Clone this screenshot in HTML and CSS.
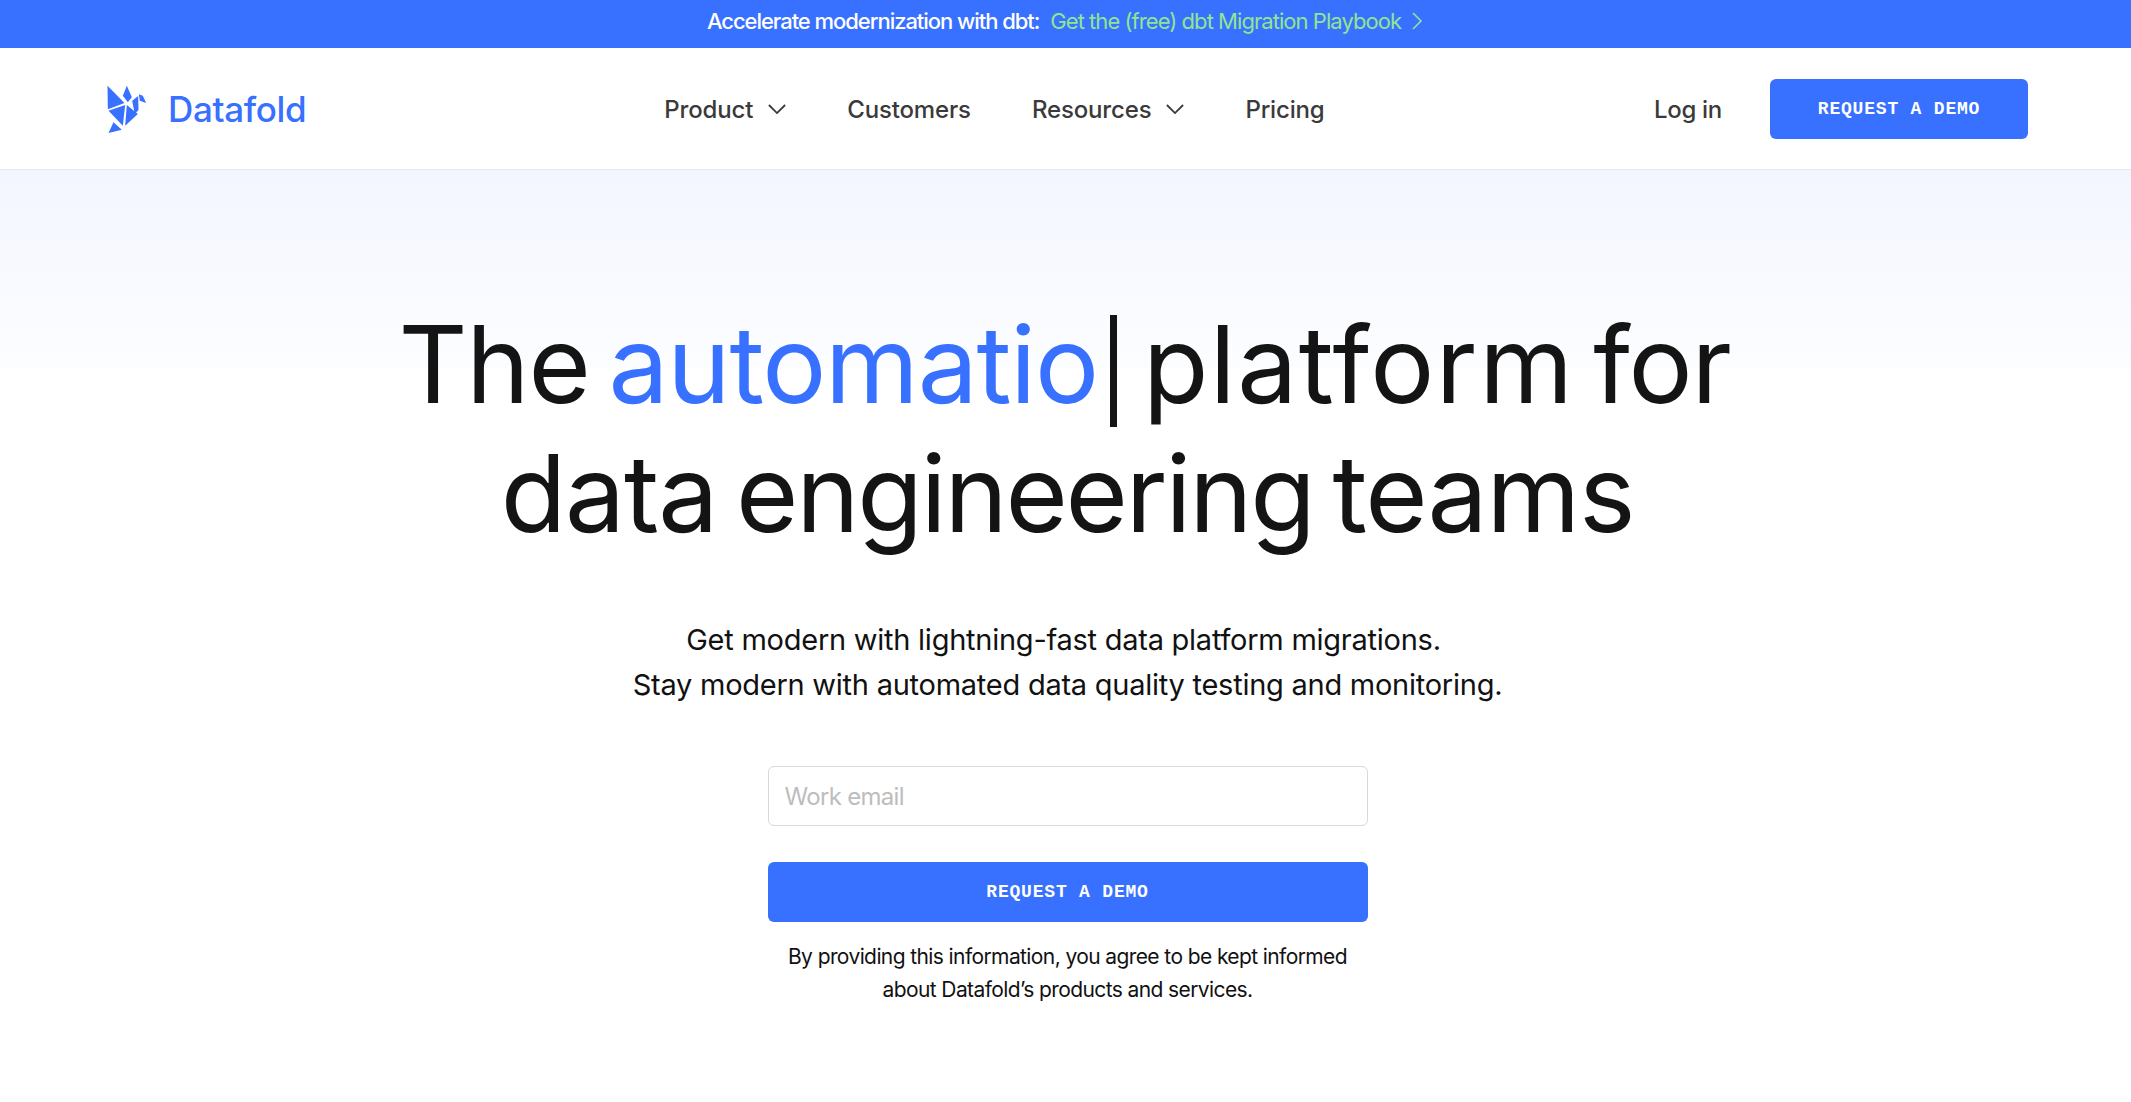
FILE: index.html
```html
<!DOCTYPE html>
<html lang="en">

<head>
  <meta charset="UTF-8">
  <meta name="viewport" content="width=device-width, initial-scale=1.0">
  <title>Datafold</title>
  <link rel="stylesheet" href="styles.css">
</head>

<body>
  <div class="banner">
    <span class="banner-text">Accelerate modernization with dbt:</span>
    <a class="banner-link" href="#">Get the (free) dbt Migration Playbook
      <svg class="banner-arrow" viewBox="0 0 12 20" width="12" height="20"><path d="M2 2l8 8-8 8" /></svg>
    </a>
  </div>

  <header class="nav">
    <a class="logo" href="#">
      <svg class="logo-mark" viewBox="50 40 125 150" width="42" height="50">
        <path d="M54 45L105 97 55 116z" />
        <path d="M112 45L127 80 115 95 100 75z" />
        <path d="M148 71L160 75 170 97 151 90z" />
        <path d="M146 76L147 118 136 130 128 90z" />
        <path d="M57 120L107 103 100 165z" />
        <path d="M112 103L145 130 107 165z" />
        <path d="M72 155L97 177 57 187z" />
      </svg>
      <span class="logo-name">Datafold</span>
    </a>
    <nav class="nav-links">
      <a href="#">Product <svg class="caret" viewBox="0 0 20 12" width="18" height="11"><path d="M1 1l9 9 9-9" /></svg></a>
      <a href="#">Customers</a>
      <a href="#">Resources <svg class="caret" viewBox="0 0 20 12" width="18" height="11"><path d="M1 1l9 9 9-9" /></svg></a>
      <a href="#">Pricing</a>
    </nav>
    <div class="nav-right">
      <a class="login" href="#">Log in</a>
      <a class="btn btn-nav" href="#">REQUEST A DEMO</a>
    </div>
  </header>

  <main class="hero">
    <h1>The <span class="blue">automatio</span><span class="cursor"></span> <span class="wide">platform</span> <span class="last">for</span><br>data <span class="tight">engineering</span> teams</h1>
    <p class="sub"><span class="sub-first">Get modern with lightning-fast data platform migrations.</span><br>Stay modern with automated data quality testing and monitoring.</p>
    <form class="form">
      <input class="email" type="text" placeholder="Work email">
      <a class="btn btn-form" href="#">REQUEST A DEMO</a>
      <p class="note">By providing this information, you agree to be kept informed<br>about Datafold’s products and services.</p>
    </form>
  </main>
</body>

</html>
```

FILE: styles.css
```css
* {
  box-sizing: border-box;
}

body {
  margin: 0;
  background: #fff;
  color: #111;
  font-family: "Inter", "Liberation Sans", sans-serif;
}

a {
  color: inherit;
  text-decoration: none;
}

.banner {
  height: 48px;
  padding: 0 1px 6px 0;
  background: #3870ff;
  display: flex;
  justify-content: center;
  align-items: center;
  gap: 11px;
  font-size: 22px;
  letter-spacing: -0.95px;
}

.banner-text {
  color: #fff;
  font-weight: 500;
  letter-spacing: -1.05px;
}

.banner-link {
  color: #92e58f;
  display: flex;
  align-items: center;
  gap: 10px;
}

.banner-arrow path {
  fill: none;
  stroke: #92e58f;
  stroke-width: 1.6;
}

.nav {
  height: 122px;
  display: flex;
  align-items: center;
  padding: 0 103px 0 106px;
  border-bottom: 1px solid #e4e7ee;
  background: #fff;
}

.logo {
  display: flex;
  align-items: center;
  gap: 20px;
}

.logo-mark path {
  fill: #3870ff;
}

.logo-name {
  color: #3870ff;
  font-size: 35px;
  font-weight: 500;
  letter-spacing: -0.35px;
}

.nav-links {
  display: flex;
  gap: 61px;
  margin-left: 358px;
  padding-top: 2px;
  color: #3a3a3a;
  font-size: 24px;
  font-weight: 500;
  letter-spacing: -0.15px;
}

.nav-links a {
  display: flex;
  align-items: center;
  gap: 15px;
}

.caret path {
  fill: none;
  stroke: #3a3a3a;
  stroke-width: 2;
}

.nav-right {
  margin-left: auto;
  display: flex;
  align-items: center;
  gap: 48px;
}

.login {
  padding-top: 2px;
  color: #3a3a3a;
  font-size: 24px;
  font-weight: 500;
  letter-spacing: -0.3px;
}

.btn {
  display: flex;
  align-items: center;
  justify-content: center;
  height: 60px;
  border-radius: 6px;
  background: #3870ff;
  color: #fff;
  font-family: "Liberation Mono", monospace;
  font-size: 18px;
  font-weight: 700;
  letter-spacing: 0.8px;
}

.btn-nav {
  width: 258px;
}

.hero {
  background: linear-gradient(#f3f6ff, #fcfdff) no-repeat;
  background-size: 100% 198px;
  padding: 130px 0 0 4px;
  text-align: center;
}

h1 {
  margin: 0;
  font-size: 107px;
  font-weight: 400;
  line-height: 129px;
  letter-spacing: -1.2px;
  word-spacing: -10px;
  color: #141414;
}

.blue {
  color: #3870ff;
}

.wide {
  letter-spacing: 1.4px;
}

.tight {
  letter-spacing: -2.2px;
}

.last {
  margin-right: 6px;
}

.cursor {
  display: inline-block;
  width: 7px;
  height: 112px;
  margin: 0 7px 0 12px;
  background: #141414;
  vertical-align: -24px;
}

.sub {
  margin: 59px 0 0;
  font-size: 29px;
  line-height: 45px;
  letter-spacing: -0.25px;
  color: #111;
}

.sub-first {
  margin-right: 8px;
}

.form {
  width: 600px;
  margin: 59px auto 0;
}

.email {
  display: block;
  width: 100%;
  height: 60px;
  padding: 0 16px;
  border: 1px solid #d9d9d9;
  border-radius: 6px;
  font-family: inherit;
  font-size: 24px;
  letter-spacing: -0.7px;
  outline: none;
}

.email::placeholder {
  color: #bdbdbd;
}

.btn-form {
  margin-top: 36px;
}

.note {
  margin: 18px 0 0;
  font-size: 21px;
  line-height: 33px;
  letter-spacing: -0.6px;
}
```
